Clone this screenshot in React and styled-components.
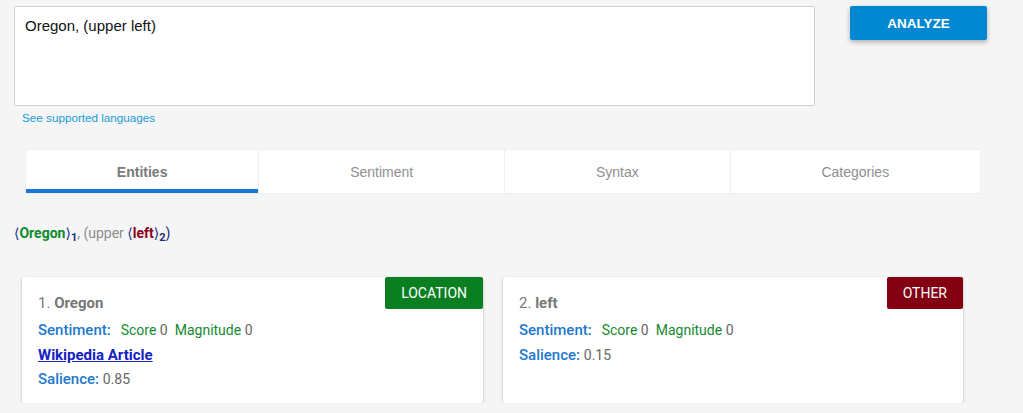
import React, { useState } from 'react';
import styled, { createGlobalStyle } from 'styled-components';

const GlobalStyle = createGlobalStyle`
  html, body {
    margin: 0;
    padding: 0;
    background: #f5f5f5;
  }
`;

const tabs = ['Entities', 'Sentiment', 'Syntax', 'Categories'];

const entities = [
  {
    name: 'Oregon',
    type: 'LOCATION',
    badge: '#0a7f22',
    score: 0,
    magnitude: 0,
    wiki: true,
    salience: '0.85',
  },
  {
    name: 'left',
    type: 'OTHER',
    badge: '#820011',
    score: 0,
    magnitude: 0,
    wiki: false,
    salience: '0.15',
  },
];

const App = () => {
  const [active, setActive] = useState(0);
  const [text, setText] = useState('Oregon, (upper left)');

  return (
    <Page>
      <GlobalStyle />
      <TopRow>
        <InputColumn>
          <TextBox value={text} onChange={(e) => setText(e.target.value)} />
          <LangLink href="#">See supported languages</LangLink>
        </InputColumn>
        <AnalyzeButton>ANALYZE</AnalyzeButton>
      </TopRow>

      <TabBar>
        {tabs.map((t, i) => (
          <Tab key={t} $active={i === active} onClick={() => setActive(i)}>
            {t}
          </Tab>
        ))}
      </TabBar>

      <Annotated>
        <Bracket>⟨</Bracket>
        <Mention $color="#0b8a2c">Oregon</Mention>
        <Bracket>⟩</Bracket>
        <Sub>1</Sub>
        <Plain>, (upper </Plain>
        <Bracket>⟨</Bracket>
        <Mention $color="#8a0019">left</Mention>
        <Bracket>⟩</Bracket>
        <Sub>2</Sub>
        <Bracket>)</Bracket>
      </Annotated>

      <CardGrid>
        {entities.map((e, i) => (
          <Card key={e.name}>
            <Badge $bg={e.badge}>{e.type}</Badge>
            <CardTitle>
              {i + 1}. <strong>{e.name}</strong>
            </CardTitle>
            <Line>
              <Label>Sentiment:</Label>
              <Metric $first>
                Score <Value>{e.score}</Value>
              </Metric>
              <Metric>
                Magnitude <Value>{e.magnitude}</Value>
              </Metric>
            </Line>
            {e.wiki && (
              <Line>
                <WikiLink href="#">Wikipedia Article</WikiLink>
              </Line>
            )}
            <Line>
              <Label>Salience:</Label> <Value>{e.salience}</Value>
            </Line>
          </Card>
        ))}
      </CardGrid>
    </Page>
  );
};

export default App;

const Page = styled.div`
  padding: 6px 0 0 14px;
  width: 1009px;
`;

const TopRow = styled.div`
  display: flex;
  align-items: flex-start;
`;

const InputColumn = styled.div`
  display: flex;
  flex-direction: column;
  width: 801px;
`;

const TextBox = styled.textarea`
  box-sizing: border-box;
  width: 801px;
  height: 100px;
  border: 1px solid #cfcfcf;
  border-radius: 2px;
  background: #fff;
  padding: 10px 10px;
  font-family: 'Liberation Sans', Arial, sans-serif;
  font-size: 15px;
  color: #111;
  resize: none;
  outline: none;
`;

const LangLink = styled.a`
  margin: 5px 0 0 8px;
  font-family: 'Liberation Sans', Arial, sans-serif;
  font-size: 11.7px;
  color: #1a9bd7;
  text-decoration: none;
`;

const AnalyzeButton = styled.button`
  margin-left: 35px;
  width: 137px;
  height: 34px;
  border: none;
  border-radius: 2px;
  background: #0288d1;
  color: #fff;
  font-family: 'Liberation Sans', Arial, sans-serif;
  font-weight: 700;
  font-size: 13.5px;
  box-shadow: 0 2px 5px rgba(0, 0, 0, 0.3);
  cursor: pointer;
`;

const TabBar = styled.div`
  display: flex;
  gap: 1px;
  margin: 25px 0 0 11px;
  width: 956px;
  height: 45px;
  background: #eeeeee;
  border: 1px solid #eeeeee;
  box-sizing: border-box;
`;

const Tab = styled.div`
  flex: 1 1 auto;
  display: flex;
  align-items: center;
  justify-content: center;
  background: #fff;
  font-family: 'Liberation Sans', Arial, sans-serif;
  font-size: 14px;
  color: ${(p) => (p.$active ? '#7a7a7a' : '#8f8f8f')};
  font-weight: ${(p) => (p.$active ? 700 : 400)};
  box-shadow: ${(p) => (p.$active ? 'inset 0 -4px 0 #1976d2' : 'none')};
  padding-top: 1px;
  cursor: pointer;
`;

const Annotated = styled.div`
  margin-top: 30px;
  font-family: Roboto, 'DejaVu Sans', sans-serif;
  font-size: 14px;
  line-height: 18px;
`;

const Bracket = styled.span`
  color: #1a2a80;
`;

const Mention = styled.span`
  color: ${(p) => p.$color};
  font-weight: 700;
`;

const Sub = styled.sub`
  color: #1a2a80;
  font-weight: 700;
  font-size: 11px;
  vertical-align: -3px;
`;

const Plain = styled.span`
  color: #8c8c8c;
`;

const CardGrid = styled.div`
  display: grid;
  grid-template-columns: 461px 460px;
  gap: 20px;
  margin: 30px 0 0 8px;
`;

const Card = styled.div`
  position: relative;
  background: #fff;
  border-radius: 2px;
  box-shadow: 0 1px 3px rgba(0, 0, 0, 0.28);
  padding: 15px 16px 11px;
  font-family: Roboto, 'Noto Sans', sans-serif;
  font-size: 15px;
`;

const Badge = styled.div`
  position: absolute;
  top: 0;
  right: 0;
  height: 32px;
  padding: 0 16px;
  display: flex;
  align-items: center;
  background: ${(p) => p.$bg};
  color: #fff;
  font-size: 14px;
  border-radius: 2px;
`;

const CardTitle = styled.div`
  line-height: 22px;
  margin-bottom: 4px;
  color: #777;
  strong {
    font-weight: 700;
  }
`;

const Line = styled.div`
  line-height: 24.5px;
`;

const Label = styled.span`
  color: #1e78cf;
  font-weight: 500;
`;

const Metric = styled.span`
  color: #168a2e;
  font-size: 14px;
  margin-left: ${(p) => (p.$first ? '10px' : '7px')};
`;

const Value = styled.span`
  color: #666;
  font-size: 14px;
`;

const WikiLink = styled.a`
  color: #1322c4;
  font-weight: 700;
  text-decoration: underline;
`;
